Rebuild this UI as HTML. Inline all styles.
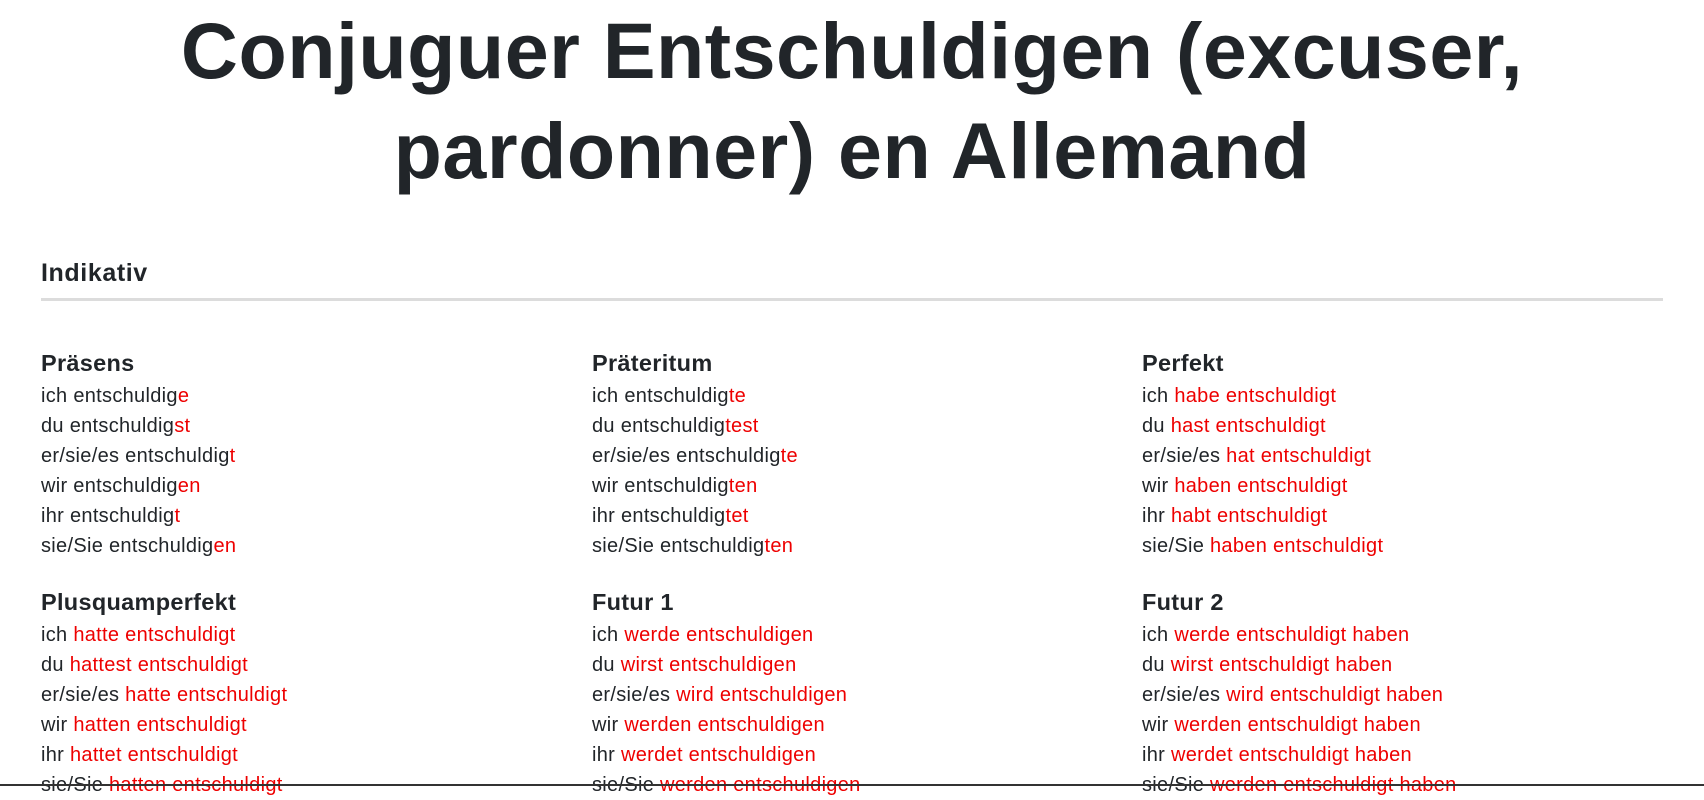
<!DOCTYPE html>
<html><head><meta charset="utf-8"><style>
html,body{margin:0;padding:0;background:#fff;width:1704px;height:786px;overflow:hidden;font-family:"Liberation Sans",sans-serif;color:#212529}
h1{position:absolute;left:0;top:0;width:1704px;margin:0;text-align:center;font-size:79px;line-height:100px;font-weight:bold;padding-top:1px;letter-spacing:0.5px}
.ind{position:absolute;left:41px;top:259px;font-size:25px;font-weight:bold;letter-spacing:0.6px}
.rule{position:absolute;left:41px;top:298px;width:1622px;height:3px;background:#dcdcdc}
.col{position:absolute;width:540px}
.col h3{margin:0;font-size:23.5px;font-weight:bold;line-height:30px;height:33px;letter-spacing:0.3px}
.col div{font-size:20px;line-height:30px;white-space:nowrap;letter-spacing:0.3px}
.r{color:#e00}
.bot{position:absolute;left:0;top:784px;width:1704px;height:2px;background:#333}
</style></head><body>
<h1>Conjuguer Entschuldigen (excuser,<br>pardonner) en Allemand</h1>
<div class="ind">Indikativ</div>
<div class="rule"></div>

<div class="col" style="left:41px;top:348px">
<h3>Präsens</h3>
<div>ich entschuldig<span class="r">e</span></div>
<div>du entschuldig<span class="r">st</span></div>
<div>er/sie/es entschuldig<span class="r">t</span></div>
<div>wir entschuldig<span class="r">en</span></div>
<div>ihr entschuldig<span class="r">t</span></div>
<div>sie/Sie entschuldig<span class="r">en</span></div>
</div>
<div class="col" style="left:592px;top:348px">
<h3>Präteritum</h3>
<div>ich entschuldig<span class="r">te</span></div>
<div>du entschuldig<span class="r">test</span></div>
<div>er/sie/es entschuldig<span class="r">te</span></div>
<div>wir entschuldig<span class="r">ten</span></div>
<div>ihr entschuldig<span class="r">tet</span></div>
<div>sie/Sie entschuldig<span class="r">ten</span></div>
</div>
<div class="col" style="left:1142px;top:348px">
<h3>Perfekt</h3>
<div>ich <span class="r">habe entschuldigt</span></div>
<div>du <span class="r">hast entschuldigt</span></div>
<div>er/sie/es <span class="r">hat entschuldigt</span></div>
<div>wir <span class="r">haben entschuldigt</span></div>
<div>ihr <span class="r">habt entschuldigt</span></div>
<div>sie/Sie <span class="r">haben entschuldigt</span></div>
</div>

<div class="col" style="left:41px;top:587px">
<h3>Plusquamperfekt</h3>
<div>ich <span class="r">hatte entschuldigt</span></div>
<div>du <span class="r">hattest entschuldigt</span></div>
<div>er/sie/es <span class="r">hatte entschuldigt</span></div>
<div>wir <span class="r">hatten entschuldigt</span></div>
<div>ihr <span class="r">hattet entschuldigt</span></div>
<div>sie/Sie <span class="r">hatten entschuldigt</span></div>
</div>
<div class="col" style="left:592px;top:587px">
<h3>Futur 1</h3>
<div>ich <span class="r">werde entschuldigen</span></div>
<div>du <span class="r">wirst entschuldigen</span></div>
<div>er/sie/es <span class="r">wird entschuldigen</span></div>
<div>wir <span class="r">werden entschuldigen</span></div>
<div>ihr <span class="r">werdet entschuldigen</span></div>
<div>sie/Sie <span class="r">werden entschuldigen</span></div>
</div>
<div class="col" style="left:1142px;top:587px">
<h3>Futur 2</h3>
<div>ich <span class="r">werde entschuldigt haben</span></div>
<div>du <span class="r">wirst entschuldigt haben</span></div>
<div>er/sie/es <span class="r">wird entschuldigt haben</span></div>
<div>wir <span class="r">werden entschuldigt haben</span></div>
<div>ihr <span class="r">werdet entschuldigt haben</span></div>
<div>sie/Sie <span class="r">werden entschuldigt haben</span></div>
</div>
<div class="bot"></div>
</body></html>
